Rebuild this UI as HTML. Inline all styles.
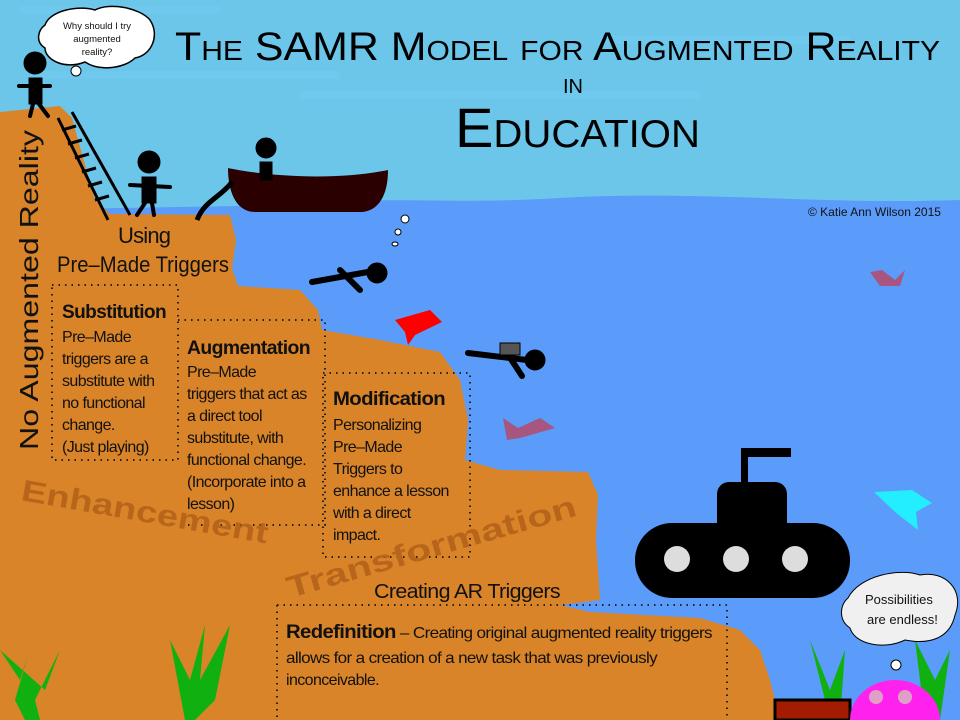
<!DOCTYPE html>
<html><head><meta charset="utf-8"><style>
html,body{margin:0;padding:0;width:960px;height:720px;overflow:hidden;background:#5b9bfa}
svg{display:block}
.t{font-family:"Liberation Sans Narrow","Liberation Sans",sans-serif;fill:#111}
.b{font-weight:bold}
</style></head><body>
<svg width="960" height="720" viewBox="0 0 960 720" xmlns="http://www.w3.org/2000/svg">
<rect width="960" height="720" fill="#5b9bfa"/>
<path d="M0 0H960V200C820 205 700 190 560 198C450 205 380 195 300 205L0 210Z" fill="#6cc6ea"/>
<path d="M20 10h200M40 75h300M300 95h400M600 40h250" stroke="#72cbf3" stroke-width="8" opacity=".6"/>
<path d="M0 112L60 106L72 118L78 140L95 200L110 214L230 215L236 240L232 268L238 286L300 290L318 310L322 330L380 340L440 352L460 380L468 420L465 460L500 470L588 472L598 495L596 540L600 600L560 605L590 612L700 618L740 630L760 650L770 680L780 720L0 720Z" fill="#d98428"/>
<path d="M228 168C260 175 330 182 388 170C388 200 375 212 360 212H255C238 212 228 195 228 168Z" fill="#2a0000"/>
<g fill="#000" stroke="#000" stroke-linecap="round">
<circle cx="35" cy="63" r="11"/><rect x="29" y="78" width="13" height="26"/><path d="M19 86L50 86M33 104L30 116M39 104L48 116" stroke-width="4" fill="none"/>
<circle cx="149" cy="162" r="11"/><rect x="142" y="177" width="14" height="26"/><path d="M130 185L170 187M145 203L137 215M152 203L154 215" stroke-width="4" fill="none"/>
<circle cx="266" cy="148" r="10"/><rect x="260" y="162" width="12" height="18"/>
<circle cx="377" cy="273" r="10"/><path d="M312 282L368 272M340 270L360 290" stroke-width="6" fill="none"/>
<circle cx="535" cy="360" r="10"/><path d="M468 353L527 360M505 350L522 376" stroke-width="6" fill="none"/><rect x="500" y="343" width="20" height="12" fill="#555"/>
</g>
<path d="M58 118L108 220M72 112L130 215" stroke="#000" stroke-width="3"/>
<path d="M62 130l14-4M68 144l14-4M75 158l14-4M82 172l14-4M88 186l14-4M95 200l14-4" stroke="#000" stroke-width="3"/>
<path d="M197 220C205 200 220 198 232 182" stroke="#000" stroke-width="5" fill="none"/>
<g fill="#fff" stroke="#000"><circle cx="405" cy="219" r="4"/><circle cx="398" cy="232" r="3"/><ellipse cx="395" cy="244" rx="3" ry="2"/></g>
<path d="M45 25C50 10 80 5 95 10C110 2 140 8 150 20C160 35 152 55 135 58C125 68 100 72 85 62C65 70 45 60 45 48C35 42 38 30 45 25Z" fill="#fff" stroke="#000" stroke-width="1.5"/>
<circle cx="76" cy="71" r="5" fill="#fff" stroke="#000"/>
<text class="t" font-size="9.5" text-anchor="middle" x="97" y="29">Why should I try</text>
<text class="t" font-size="9.5" text-anchor="middle" x="97" y="42">augmented</text>
<text class="t" font-size="9.5" text-anchor="middle" x="97" y="55">reality?</text>
<text fill="#000" font-family="Liberation Sans" font-size="40" x="175" y="60" textLength="765" lengthAdjust="spacingAndGlyphs" style="font-variant:small-caps">The SAMR Model for Augmented Reality</text>
<text fill="#000" font-family="Liberation Sans" font-size="20" x="563" y="93">IN</text>
<text fill="#000" font-family="Liberation Sans" font-size="56" x="455" y="147" textLength="245" lengthAdjust="spacingAndGlyphs" style="font-variant:small-caps">Education</text>
<text class="t" font-size="12" x="808" y="216">© Katie Ann Wilson 2015</text>
<path d="M395 320L430 310L442 322L415 335L408 345L405 332Z" fill="#f00"/>
<path d="M503 418L518 428L540 418L555 428L520 438L507 440Z" fill="#a85580"/>
<path d="M870 272L882 270L895 280L905 270L900 286L880 286Z" fill="#a85580"/>
<path d="M874 492L912 490L932 503L916 512L918 530L895 512Z" fill="#22eeff"/>
<g fill="#000"><rect x="741" y="450" width="7" height="40"/><rect x="741" y="448" width="50" height="9"/><rect x="717" y="482" width="70" height="60" rx="12"/><rect x="635" y="523" width="215" height="75" rx="37"/></g>
<g fill="#ddd"><circle cx="677" cy="559" r="13"/><circle cx="736" cy="559" r="13"/><circle cx="795" cy="559" r="13"/></g>
<g fill="#10b010"><path d="M0 650L20 680L28 655L15 700L25 720H40L35 700L60 650L45 690Z"/><path d="M170 640L190 680L205 625L200 680L230 625L215 700L195 720H185Z"/><path d="M810 640L830 690L845 650L840 720H830Z"/><path d="M915 640L935 680L950 650L940 720H925Z"/></g>
<path d="M775 700H850V720H775Z" fill="#a31c00" stroke="#000" stroke-width="3"/>
<ellipse cx="895" cy="720" rx="45" ry="40" fill="#ff22ee"/>
<g fill="#dfa0c8"><circle cx="876" cy="697" r="7"/><circle cx="905" cy="697" r="7"/></g>
<path d="M848 598C860 575 900 568 920 575C945 570 965 590 955 615C950 638 930 645 905 640C885 650 855 645 850 628C838 620 840 605 848 598Z" fill="#f0f0f0" stroke="#000"/>
<circle cx="896" cy="665" r="5" fill="#fff" stroke="#000"/>
<text class="t" font-family="Liberation Serif" font-size="13" x="865" y="604">Possibilities</text>
<text class="t" font-family="Liberation Serif" font-size="13" x="867" y="624">are endless!</text>
<g fill="none" stroke="#222" stroke-width="2" stroke-dasharray="1.5 5">
<path d="M52 285H178V460H52Z"/><path d="M178 320H325V525H178"/><path d="M323 373H470V557H323Z"/><path d="M277 605H727V720M277 605V720"/>
</g>
<text class="t" font-size="26" transform="translate(38 450) rotate(-90)" textLength="320" lengthAdjust="spacingAndGlyphs">No Augmented Reality</text>
<text class="t" font-size="22" x="118" y="243" letter-spacing="-0.8">Using</text>
<text class="t" font-size="22" x="57" y="272" textLength="172" lengthAdjust="spacingAndGlyphs">Pre–Made Triggers</text>
<g class="t" font-size="16" letter-spacing="-0.6">
<text class="b" font-size="19" x="62" y="318" textLength="104" lengthAdjust="spacingAndGlyphs">Substitution</text>
<text x="62" y="342">Pre–Made</text><text x="62" y="364">triggers are a</text><text x="62" y="386">substitute with</text><text x="62" y="408">no functional</text><text x="62" y="430">change.</text><text x="62" y="452">(Just playing)</text>
<text class="b" font-size="19" x="187" y="354" textLength="123" lengthAdjust="spacingAndGlyphs">Augmentation</text>
<text x="187" y="377">Pre–Made</text><text x="187" y="399">triggers that act as</text><text x="187" y="421">a direct tool</text><text x="187" y="443">substitute, with</text><text x="187" y="465">functional change.</text><text x="187" y="487">(Incorporate into a</text><text x="187" y="509">lesson)</text>
<text class="b" font-size="19" x="333" y="405" textLength="112" lengthAdjust="spacingAndGlyphs">Modification</text>
<text x="333" y="430">Personalizing</text><text x="333" y="452">Pre–Made</text><text x="333" y="474">Triggers to</text><text x="333" y="496">enhance a lesson</text><text x="333" y="518">with a direct</text><text x="333" y="540">impact.</text>
<text font-size="20" x="374" y="598" textLength="186" lengthAdjust="spacingAndGlyphs">Creating AR Triggers</text>
<text x="286" y="638" textLength="426" lengthAdjust="spacingAndGlyphs"><tspan class="b" font-size="19">Redefinition</tspan> – Creating original augmented reality triggers</text>
<text x="286" y="663" textLength="371" lengthAdjust="spacingAndGlyphs">allows for a creation of a new task that was previously</text>
<text x="286" y="685">inconceivable.</text>
</g>
<text font-family="Liberation Sans" font-weight="bold" font-size="30" fill="#b8651c" transform="translate(20 500) rotate(10)" textLength="250" lengthAdjust="spacingAndGlyphs">Enhancement</text>
<text font-family="Liberation Sans" font-weight="bold" font-size="30" fill="#b8651c" transform="translate(290 598) rotate(-16)" textLength="300" lengthAdjust="spacingAndGlyphs">Transformation</text>
</svg>
</body></html>
